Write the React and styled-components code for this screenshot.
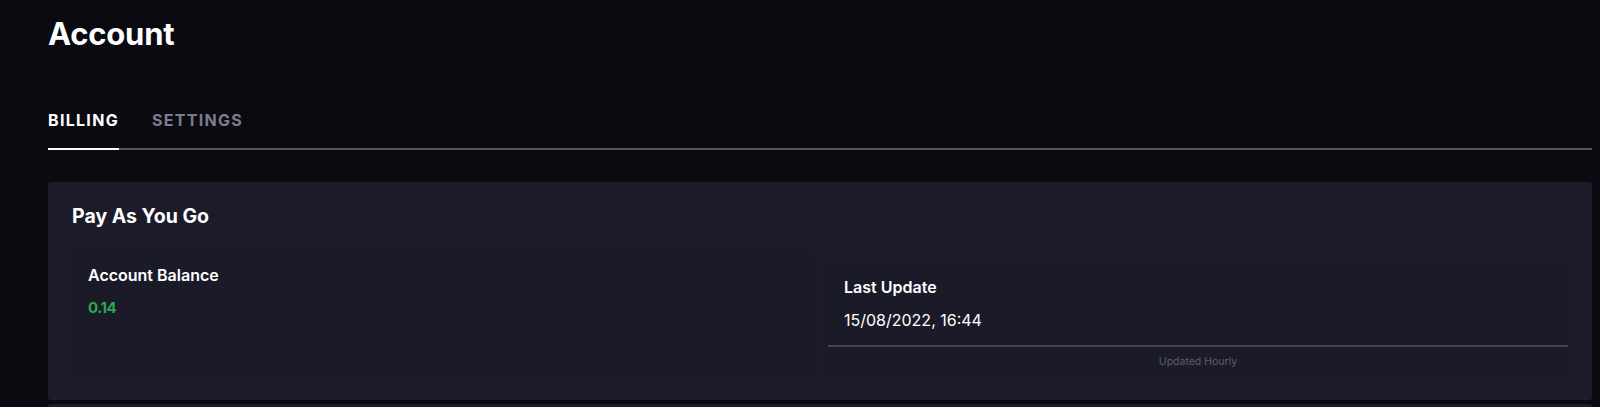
import React, { useState } from 'react'
import styled, { createGlobalStyle } from "styled-components";

const GlobalStyle = createGlobalStyle`
  body {
    margin: 0;
    background: #0a0a10;
    font-family: Inter, Lato, sans-serif;
    color: #ffffff;
  }
`
const Page = styled.div`
  padding: 14px 8px 0 48px;
`
const Title = styled.h1`
  margin: 0;
  font-size: 31px;
  font-weight: 700;
  letter-spacing: -0.2px;
  line-height: 40px;
`
const Tabs = styled.div`
  display: flex;
  margin-top: 56px;
  border-bottom: 2px solid #55555f;
`
const Tab = styled.button`
  background: none;
  border: none;
  padding: 0 0 18px;
  margin: 0 33px -2px 0;
  font-family: inherit;
  font-size: 16px;
  font-weight: 700;
  letter-spacing: 1.3px;
  color: ${p => (p.active ? "#ffffff" : "#7d7c8c")};
  border-bottom: 2px solid ${p => (p.active ? "#ffffff" : "transparent")};
  cursor: pointer;
`
const Card = styled.section`
  margin-top: 32px;
  background: #1c1b2a;
  border-radius: 3px;
  padding: 22px 24px 24px;
`
const CardTitle = styled.h2`
  margin: 0 0 23px;
  font-size: 19.5px;
  font-weight: 700;
  line-height: 24px;
`
const Grid = styled.div`
  display: grid;
  grid-template-columns: 1fr 1fr;
  gap: 16px;
  align-items: end;
`
const Box = styled.div`
  background: #1b1a28;
  box-shadow: 0 0 2px rgba(0, 0, 0, 0.25);
  height: ${p => p.h}px;
  display: flex;
  flex-direction: column;
`
const BoxBody = styled.div`
  padding: ${p => p.top}px 16px 0;
  flex: 1;
`
const Label = styled.div`
  font-size: 16px;
  font-weight: 600;
  line-height: 20px;
`
const Value = styled.div`
  margin-top: 13px;
  font-size: ${p => p.size}px;
  font-weight: ${p => (p.green ? 700 : 400)};
  letter-spacing: ${p => (p.green ? "-0.4px" : "0")};
  color: ${p => (p.green ? "#2ea84f" : "#ffffff")};
  line-height: 20px;
`
const Footer = styled.div`
  border-top: 2px solid #45444f;
  height: 29px;
  display: flex;
  align-items: center;
  justify-content: center;
  font-size: 10.5px;
  color: #5f5e6d;
`
const NextCard = styled.div`
  margin-top: 4px;
  height: 10px;
  background: #1c1b2a;
  border-radius: 3px 3px 0 0;
`

const App = () => {
  const [tab, setTab] = useState("billing")
  return (
    <Page>
      <GlobalStyle />
      <Title>Account</Title>
      <Tabs>
        <Tab active={tab === "billing"} onClick={() => setTab("billing")}>BILLING</Tab>
        <Tab active={tab === "settings"} onClick={() => setTab("settings")}>SETTINGS</Tab>
      </Tabs>
      <Card>
        <CardTitle>Pay As You Go</CardTitle>
        <Grid>
          <Box h={125}>
            <BoxBody top={14}>
              <Label>Account Balance</Label>
              <Value green size={15}>0.14</Value>
            </BoxBody>
          </Box>
          <Box h={114}>
            <BoxBody top={15}>
              <Label>Last Update</Label>
              <Value size={16}>15/08/2022, 16:44</Value>
            </BoxBody>
            <Footer>Updated Hourly</Footer>
          </Box>
        </Grid>
      </Card>
      <NextCard />
    </Page>
  );
}

export default App
